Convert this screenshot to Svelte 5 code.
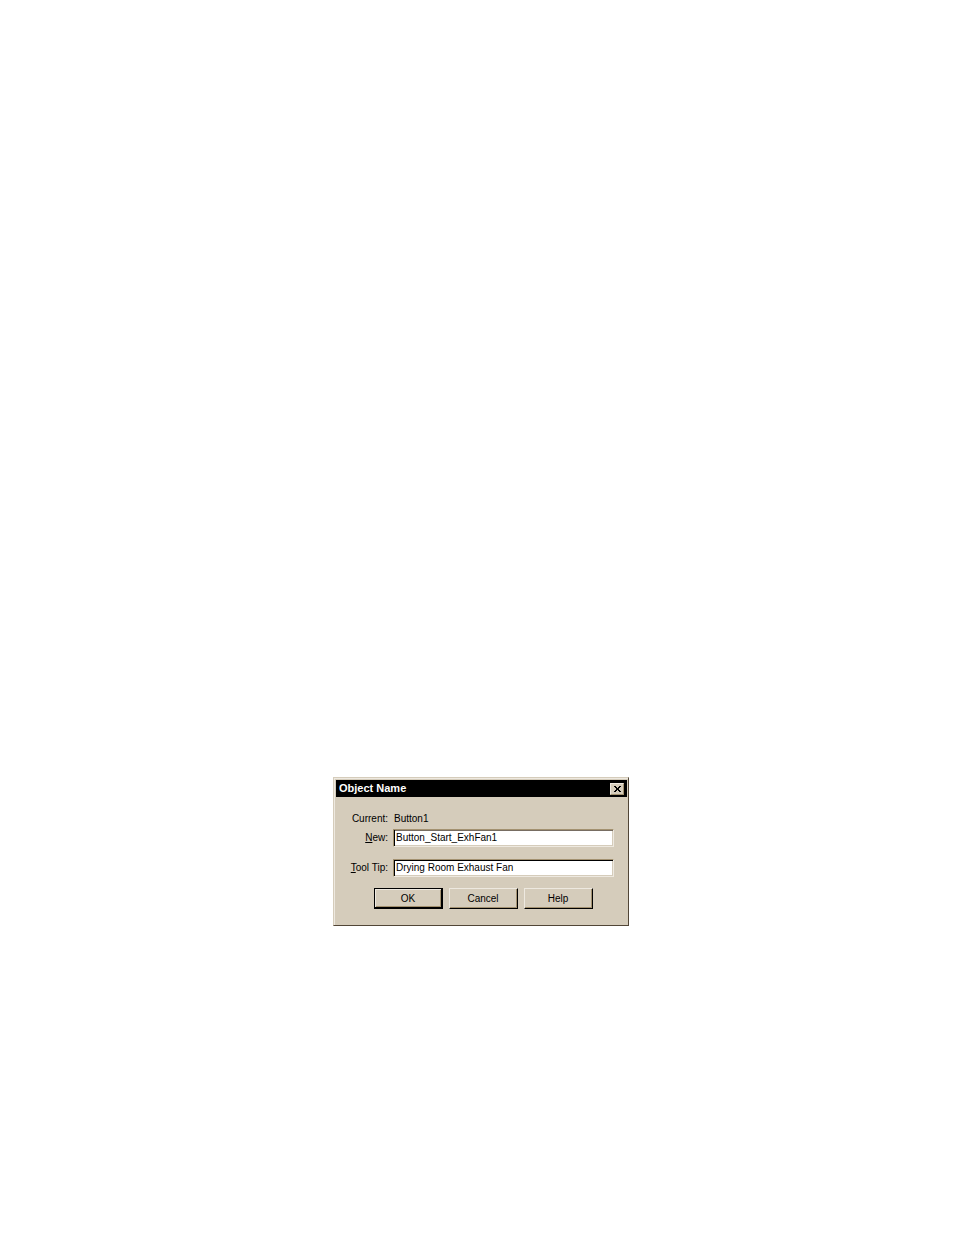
<script>
  let open = $state(true);
  let name = $state('Button_Start_ExhFan1');
  let tip = $state('Drying Room Exhaust Fan');
  const close = () => (open = false);
</script>

<main>
  {#if open}
    <form class="dialog" role="dialog" aria-labelledby="title" onsubmit={(e) => { e.preventDefault(); close(); }}>
      <header>
        <h1 id="title">Object Name</h1>
        <button type="button" class="close" aria-label="Close" onclick={close}>
          <svg viewBox="0 0 7 6" width="7" height="6" shape-rendering="crispEdges" aria-hidden="true">
            <path d="M0 0h2v1h-2zM5 0h2v1h-2zM1 1h2v1h-2zM4 1h2v1h-2zM2 2h3v2h-3zM1 4h2v1h-2zM4 4h2v1h-2zM0 5h2v1h-2zM5 5h2v1h-2z" />
          </svg>
        </button>
      </header>
      <div class="fields">
        <span class="caption">Current:</span>
        <output>Button1</output>
        <label for="name"><u>N</u>ew:</label>
        <input id="name" type="text" spellcheck="false" bind:value={name} />
        <label for="tip" class="spaced"><u>T</u>ool Tip:</label>
        <input id="tip" class="spaced dark" type="text" spellcheck="false" bind:value={tip} />
      </div>
      <footer>
        <button type="submit" class="default">OK</button>
        <button type="button" onclick={close}>Cancel</button>
        <button type="button">Help</button>
      </footer>
    </form>
  {/if}
</main>

<style>
  :global(body) {
    margin: 0;
    background: #fff;
  }

  main {
    box-sizing: border-box;
    min-height: 100vh;
    display: grid;
    grid-template-rows: 777fr auto 309fr;
    justify-content: center;
    padding-left: 8px;
    font: 10px/12px "Liberation Sans", Arial, sans-serif;
    color: #000;
  }

  .dialog {
    grid-row: 2;
    box-sizing: border-box;
    width: 296px;
    max-width: 100vw;
    padding: 1px 1px 16px;
    background: #d5ccbb;
    border: 1px solid;
    border-color: #d5ccbb #514536 #514536 #d5ccbb;
    box-shadow: inset 1px 1px #eee9e0;
  }

  header {
    display: flex;
    align-items: center;
    justify-content: space-between;
    height: 17px;
    margin: 1px 0 0 1px;
    padding: 0 3px;
    background: #000;
    color: #fff;
  }

  h1 {
    margin: 0;
    font-size: 11px;
    line-height: 17px;
    font-weight: bold;
  }

  button,
  input {
    box-sizing: border-box;
    margin: 0;
    font: inherit;
    color: inherit;
    border-radius: 0;
  }

  button {
    background: #d5ccbb;
    border: 1px solid;
    border-color: #eee9e0 #000 #000 #eee9e0;
    box-shadow: inset -1px -1px #a39170;
  }

  .close {
    display: grid;
    place-items: center;
    width: 14px;
    height: 12px;
    padding: 0;
    border-color: #eee9e0 #a39170 #a39170 #eee9e0;
    box-shadow: none;
    color: #000;
  }

  .fields {
    display: grid;
    grid-template-columns: 53px 1fr;
    grid-template-rows: 14px auto auto;
    column-gap: 5px;
    row-gap: 3px;
    align-items: center;
    padding: 15px 13px 0 0;
  }

  .caption,
  label {
    text-align: right;
  }

  output {
    padding-left: 1px;
  }

  u {
    text-underline-offset: 1px;
  }

  input {
    width: 100%;
    height: 18px;
    padding: 0 2px 1px;
    background: #fff;
    border: 1px solid;
    border-color: #a39170 #eee9e0 #eee9e0 #a39170;
    box-shadow: inset 1px 0 #000, inset 0 1px #776d62, inset -1px -1px #d5ccbb;
    outline: none;
  }

  .dark {
    box-shadow: inset 1px 1px #000, inset -1px -1px #d5ccbb;
  }

  .spaced {
    margin-top: 9px;
  }

  footer {
    display: flex;
    justify-content: center;
    gap: 6px;
    padding: 11px 0 0 4px;
  }

  footer button {
    width: 69px;
    height: 21px;
    padding: 0;
  }

  .default {
    border-color: #000;
    box-shadow: inset -1px -1px #000, inset 1px 1px #eee9e0, inset -2px -2px #a39170;
  }
</style>
